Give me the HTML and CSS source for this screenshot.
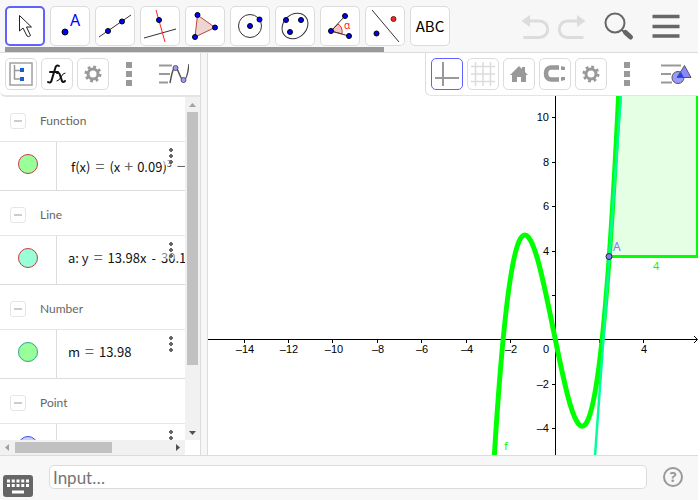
FILE: index.html
```html
<!DOCTYPE html>
<html lang="en">
<head>
    <meta charset="UTF-8">
    <meta name="viewport" content="width=device-width, initial-scale=1.0">
    <title>Graphing Calculator</title>
    <link rel="stylesheet" href="styles.css">
</head>
<body>
    <header class="toolbar">
        <div class="tools">
            <button class="tool selected" aria-label="Move">
                <svg width="36" height="36" viewBox="0 0 36 36"><path d="M12.500 7.500v15.500l3.500-3 4 8q1.500 1.500 3.500-.5l-4-8.500h5z" fill="#fff" stroke="#222"/></svg>
            </button>
            <button class="tool" aria-label="Point">
                <svg width="36" height="36" viewBox="0 0 36 36"><circle cx="13" cy="24" r="3" fill="#00f" stroke="#000"/><text x="18" y="18" class="tool-a">A</text></svg>
            </button>
            <button class="tool" aria-label="Line">
                <svg width="36" height="36" viewBox="0 0 36 36"><path d="M2 29L34 7" stroke="#333"/><g fill="#00f" stroke="#000"><circle cx="11" cy="23" r="2.500"/><circle cx="25" cy="13.500" r="2.500"/></g></svg>
            </button>
            <button class="tool" aria-label="Perpendicular Line">
                <svg width="36" height="36" viewBox="0 0 36 36"><path d="M2 30L34 21" stroke="#333"/><path d="M14 2l9 32" stroke="#f22"/><circle cx="17" cy="12" r="2.500" fill="#00f" stroke="#000"/></svg>
            </button>
            <button class="tool" aria-label="Polygon">
                <svg width="36" height="36" viewBox="0 0 36 36"><path d="M10.500 7L28 19.500 8 29z" fill="#eed5d2" stroke="#b44"/><g fill="#00f" stroke="#000"><circle cx="10.500" cy="7" r="2.500"/><circle cx="28" cy="19.500" r="2.500"/><circle cx="8" cy="29" r="2.500"/></g></svg>
            </button>
            <button class="tool" aria-label="Circle with Center through Point">
                <svg width="36" height="36" viewBox="0 0 36 36"><circle cx="18" cy="18" r="11.500" fill="none" stroke="#333"/><g fill="#00f" stroke="#000"><circle cx="18" cy="18" r="2.500"/><circle cx="27.500" cy="11.500" r="2.500"/></g></svg>
            </button>
            <button class="tool" aria-label="Ellipse">
                <svg width="36" height="36" viewBox="0 0 36 36"><ellipse cx="18" cy="18" rx="14" ry="11.500" transform="rotate(-42 18 18)" fill="none" stroke="#333"/><g fill="#00f" stroke="#000"><circle cx="9" cy="12" r="2.500"/><circle cx="24" cy="12" r="2.500"/><circle cx="13" cy="24" r="2.500"/></g></svg>
            </button>
            <button class="tool" aria-label="Angle">
                <svg width="36" height="36" viewBox="0 0 36 36"><path d="M9 23l7-7q5 3 4 10z" fill="#f5c5c5" stroke="#d33"/><path d="M23 8L9 23l18 5" fill="none" stroke="#333"/><g fill="#00f" stroke="#000"><circle cx="23" cy="8" r="2.500"/><circle cx="9" cy="23" r="2.500"/><circle cx="27" cy="28" r="2.500"/></g><text x="22" y="21" class="tool-alpha">α</text></svg>
            </button>
            <button class="tool" aria-label="Reflect about Line">
                <svg width="36" height="36" viewBox="0 0 36 36"><path d="M5 2l27 32" stroke="#333"/><circle cx="26.500" cy="11" r="2.500" fill="#f22" stroke="#622"/><circle cx="9.500" cy="25.500" r="2.500" fill="#00f" stroke="#000"/></svg>
            </button>
            <button class="tool tool-text">ABC</button>
        </div>
        <div class="actions">
            <button class="action" aria-label="Undo">
                <svg width="32" height="32" viewBox="0 0 32 32"><path d="M3.500 27.500h16a8.200 8.200 0 0 0 0-16.500H9" fill="none" stroke="#dcdcdc" stroke-width="3"/><path d="M1.500 11l8.500-6v12z" fill="#dcdcdc"/></svg>
            </button>
            <button class="action" aria-label="Redo">
                <svg width="32" height="32" viewBox="0 0 32 32"><path d="M26.500 27.500h-16a8.200 8.200 0 0 1 0-16.500H21" fill="none" stroke="#dcdcdc" stroke-width="3"/><path d="M28.500 11L20 5v12z" fill="#dcdcdc"/></svg>
            </button>
            <button class="action search" aria-label="Search">
                <svg width="32" height="32" viewBox="0 0 32 32"><circle cx="11" cy="13" r="9.500" fill="none" stroke="#666" stroke-width="2"/><path d="M17.500 19.500l4 4" stroke="#666" stroke-width="2"/><path d="M21.500 22.500l5 4.500" stroke="#666" stroke-width="5" stroke-linecap="round"/></svg>
            </button>
            <button class="action" aria-label="Menu">
                <svg width="32" height="32" viewBox="0 0 32 32"><path d="M1.500 6.500h27M1.500 16.500h27M1.500 26h27" stroke="#666" stroke-width="3.500"/></svg>
            </button>
        </div>
        <div class="tool-scroll"></div>
    </header>

    <main class="views">
        <section class="algebra">
            <div class="stylebar">
                <button class="style-btn" aria-label="Sort objects">
                    <svg width="26" height="26" viewBox="0 0 26 26"><rect x="2" y="2" width="22" height="22" fill="none" stroke="#a0a0a0" stroke-width="1.500"/><path d="M6.500 4v14H12M6.500 9.500H12" fill="none" stroke="#999" stroke-width="1.500"/><path d="M12 7h4v4h-4zM12 16h4v4h-4z" fill="#1c5bd8"/></svg>
                </button>
                <button class="style-btn" aria-label="Auxiliary objects">
                    <svg width="26" height="26" viewBox="0 0 26 26"><g fill="none" stroke="#111" stroke-linecap="round"><path d="M4 21q3 2 4-3l3-10q1-5 4-3M6 11h8" stroke-width="2"/><path d="M13 12q2-1 3 2l2 6q1 2 3 0" stroke-width="2"/><path d="M21 12q-2 0-4 4t-4 4"/></g></svg>
                </button>
                <button class="style-btn" aria-label="Settings">
                    <svg width="26" height="26" viewBox="0 0 26 26"><circle cx="13" cy="13" r="5" fill="none" stroke="#999" stroke-width="3"/><circle cx="13" cy="13" r="7" fill="none" stroke="#999" stroke-width="3" stroke-dasharray="2.750"/></svg>
                </button>
                <button class="more-btn" aria-label="More">
                    <svg width="6" height="24" viewBox="0 0 6 24"><path d="M0 0h6v6H0zM0 9h6v6H0zM0 18h6v6H0z" fill="#999"/></svg>
                </button>
                <button class="view-btn" aria-label="Algebra view">
                    <svg width="32" height="22" viewBox="0 0 32 22"><path d="M2 2.500h13M2 11h11M2 19.500h9" stroke="#999" stroke-width="2"/><path d="M13 20C15 9 16.500 4 18.500 4.500C21.500 5 23 17 26.500 17C29 17 31 10 32 1" fill="none" stroke="#555" stroke-width="1.500"/><g fill="#99f" stroke="#555"><circle cx="18.500" cy="5" r="2.500"/><circle cx="26.500" cy="17" r="2.500"/></g></svg>
                </button>
            </div>
            <div class="algebra-body">
                <div class="objects">
                    <h2 class="group"><button class="fold" aria-label="Collapse Function"></button>Function</h2>
                    <div class="row">
                        <div class="marble-cell"><button class="marble green" aria-label="Show f"></button></div>
                        <div class="formula function">f(x)<span class="op">=</span>(x<span class="op plus">+</span>0.09)<sup>3</sup><span class="op">−</span></div>
                        <button class="dots" aria-label="More f"></button>
                    </div>
                    <h2 class="group"><button class="fold" aria-label="Collapse Line"></button>Line</h2>
                    <div class="row">
                        <div class="marble-cell"><button class="marble teal" aria-label="Show a"></button></div>
                        <div class="formula">a: y<span class="op">=</span>13.98x<span class="minus">-</span>30.1</div>
                        <button class="dots" aria-label="More a"></button>
                    </div>
                    <h2 class="group"><button class="fold" aria-label="Collapse Number"></button>Number</h2>
                    <div class="row">
                        <div class="marble-cell"><button class="marble green number" aria-label="Show m"></button></div>
                        <div class="formula">m<span class="op">=</span>13.98</div>
                        <button class="dots" aria-label="More m"></button>
                    </div>
                    <h2 class="group"><button class="fold" aria-label="Collapse Point"></button>Point</h2>
                    <div class="row">
                        <div class="marble-cell"><button class="marble blue" aria-label="Show A"></button></div>
                        <div class="formula"></div>
                        <button class="dots" aria-label="More A"></button>
                    </div>
                </div>
                <div class="scroll-v">
                    <svg width="15" height="15" viewBox="0 0 15 15"><path d="M4 10l3.500-4 3.500 4z" fill="#a3a3a3"/></svg>
                    <div class="thumb-v"></div>
                    <svg width="15" height="15" viewBox="0 0 15 15"><path d="M4 6h7l-3.500 4z" fill="#505050"/></svg>
                </div>
                <div class="scroll-h">
                    <svg width="15" height="15" viewBox="0 0 15 15"><path d="M9 4v7L5 7.500z" fill="#a3a3a3"/></svg>
                    <div class="thumb-h"></div>
                    <svg width="15" height="15" viewBox="0 0 15 15"><path d="M6 4v7l4-3.500z" fill="#505050"/></svg>
                </div>
            </div>
        </section>
        <div class="splitter"></div>
        <section class="graphics">
            <svg class="plot" viewBox="208 53 490 402" preserveAspectRatio="xMidYMid slice">
                <!-- axes: origin 555.5,339.5 and 22.2 per unit -->
                <g stroke="#000" fill="none" shape-rendering="crispEdges">
                    <path d="M208 339.500H697M555.500 53V455"/>
                    <path d="M244.500 339v4M288.500 339v4M332.500 339v4M377.500 339v4M421.500 339v4M466.500 339v4M510.500 339v4M599.500 339v4M643.500 339v4"/>
                    <path d="M552 117.500h4M552 162.500h4M552 206.500h4M552 251.500h4M552 295.500h4M552 384.500h4M552 428.500h4"/>
                </g>
                <path d="M694 336l3.500 3.500L694 343" fill="none" stroke="#000"/>
                <g class="labels-x">
                    <text x="245" y="353">–14</text>
                    <text x="289" y="353">–12</text>
                    <text x="334" y="353">–10</text>
                    <text x="378" y="353">–8</text>
                    <text x="422" y="353">–6</text>
                    <text x="467" y="353">–4</text>
                    <text x="511" y="353">–2</text>
                    <text x="546" y="353">0</text>
                    <text x="644" y="353">4</text>
                </g>
                <g class="labels-y">
                    <text x="549" y="121">10</text>
                    <text x="549" y="166">8</text>
                    <text x="549" y="210">6</text>
                    <text x="549" y="255">4</text>
                    <text x="549" y="388">–2</text>
                    <text x="549" y="432">–4</text>
                </g>
                <!-- slope triangle -->
                <path d="M609 256.500H697.500V-980z" fill="#0f0" fill-opacity=".1" stroke="#0f0" stroke-width="3"/>
                <path d="M486.900 597C531.300-379.800 575.700 1041 620.100 64.200" fill="none" stroke="#0f0" stroke-width="5"/>
                <path d="M592 498L622.500 73" stroke="#00ff99" stroke-width="2.500"/>
                <circle cx="609" cy="256.500" r="3" fill="#7d7dff" stroke="#222"/>
                <text x="613" y="251" class="label-point">A</text>
                <text x="653" y="270" class="label-green">4</text>
                <text x="504" y="450" class="label-green">f</text>
            </svg>
            <div class="stylebar graphics-bar">
                <button class="style-btn selected" aria-label="Axes">
                    <svg width="26" height="26" viewBox="0 0 26 26"><path d="M1 17h24M9 1v24" stroke="#999" stroke-width="2"/></svg>
                </button>
                <button class="style-btn" aria-label="Grid">
                    <svg width="26" height="26" viewBox="0 0 26 26"><path d="M1 5.500h24M1 13h24M1 20.500h24M5.500 1v24M13 1v24M20.500 1v24" stroke="#dcdcdc" stroke-width="1.500"/></svg>
                </button>
                <button class="style-btn" aria-label="Standard view">
                    <svg width="26" height="26" viewBox="0 0 26 26"><path d="M4 14l9-9 3 3V6h3v5l3 3h-2v7h-5v-5h-4v5H6v-7z" fill="#999"/></svg>
                </button>
                <button class="style-btn" aria-label="Point capturing">
                    <svg width="26" height="26" viewBox="0 0 26 26"><path d="M17 6.500H9q-5 .5-5 6t5 6h8" fill="none" stroke="#999" stroke-width="4.500"/><path d="M19 5l4 1v3h-4zM19 16h4v3l-4 1z" fill="#999"/></svg>
                </button>
                <button class="style-btn" aria-label="Settings">
                    <svg width="26" height="26" viewBox="0 0 26 26"><circle cx="13" cy="13" r="5" fill="none" stroke="#999" stroke-width="3"/><circle cx="13" cy="13" r="7" fill="none" stroke="#999" stroke-width="3" stroke-dasharray="2.750"/></svg>
                </button>
                <button class="more-btn" aria-label="More">
                    <svg width="6" height="24" viewBox="0 0 6 24"><path d="M0 0h6v6H0zM0 9h6v6H0zM0 18h6v6H0z" fill="#999"/></svg>
                </button>
                <button class="view-btn" aria-label="Graphics view">
                    <svg width="32" height="22" viewBox="0 0 32 22"><path d="M1 2.500h20M1 11h10M1 19.500h11" stroke="#999" stroke-width="2"/><circle cx="18" cy="14.500" r="6" fill="#99f" stroke="#555"/><path d="M24.500 2.500L31 14.500H17z" fill="#88f" stroke="#555"/><path d="M21 9l2.500 5H17.500z" fill="#24d"/></svg>
                </button>
            </div>
        </section>
    </main>

    <footer class="input-bar">
        <button class="keyboard" aria-label="Keyboard">
            <svg width="30" height="22" viewBox="0 0 30 22"><rect width="30" height="22" rx="3" fill="#666"/><path d="M4 6h22M4 10.500h22" stroke="#fff" stroke-width="3" stroke-dasharray="3 1.750"/><path d="M9 17h12" stroke="#fff" stroke-width="3"/></svg>
        </button>
        <input class="command" type="text" placeholder="Input…" aria-label="Input">
        <button class="help" aria-label="Help">?</button>
    </footer>
</body>
</html>
```
FILE: styles.css
```css
* {
    box-sizing: border-box;
}

body {
    margin: 0;
    padding: 0 2px 0 0;
    height: 100vh;
    display: flex;
    flex-direction: column;
    overflow: hidden;
    background: #fff;
    font-family: "Noto Sans CJK SC", "Noto Sans", sans-serif;
}

button {
    padding: 0;
    border: none;
    background: none;
    font-family: inherit;
    cursor: pointer;
}

svg {
    display: block;
}

.toolbar {
    position: relative;
    display: flex;
    justify-content: space-between;
    padding: 6px 15px 6px 5px;
    background: #f7f7f7;
    border-bottom: 1px solid #dcdcdc;
}

.tools {
    display: flex;
    gap: 5px;
}

.tool {
    display: flex;
    align-items: center;
    justify-content: center;
    width: 40px;
    height: 40px;
    background: #fff;
    border: 1px solid #dcdcdc;
    border-radius: 5px;
}

.tool.selected {
    border: 2px solid #6161ff;
}

.tool-text {
    padding-bottom: 2px;
    font-size: 15px;
    color: #000;
}

.tool-a {
    font: 16px "Noto Sans", sans-serif;
    fill: #00f;
}

.tool-alpha {
    font: 10px "Noto Sans", sans-serif;
    fill: #f22;
}

.tool-scroll {
    position: absolute;
    left: 5px;
    bottom: 0;
    width: 379px;
    height: 5px;
    background: #999;
}

.actions {
    display: flex;
    align-items: center;
    gap: 5px;
}

.search {
    margin-left: 10px;
    margin-right: 10px;
}

.views {
    flex: 1;
    display: flex;
    min-height: 0;
}

.algebra {
    display: flex;
    flex-direction: column;
    width: 200px;
}

.stylebar {
    display: flex;
    align-items: center;
    gap: 4px;
    height: 44px;
    padding: 0 11px 0 5px;
    background: #fff;
    border-bottom: 2px solid #e4e4e4;
    border-radius: 0 0 0 6px;
}

.style-btn {
    display: flex;
    align-items: center;
    justify-content: center;
    width: 32px;
    height: 32px;
    background: #fff;
    border: 1px solid #dcdcdc;
    border-radius: 5px;
}

.style-btn.selected {
    border-color: #6161ff;
}

.more-btn {
    margin-left: 13px;
}

.view-btn {
    margin-left: auto;
}

.algebra-body {
    flex: 1;
    display: grid;
    grid-template-columns: 1fr 15px;
    grid-template-rows: 1fr 15px;
    min-height: 0;
}

.objects {
    overflow: hidden;
}

.group {
    display: flex;
    align-items: center;
    gap: 14px;
    height: 45px;
    margin: 0;
    padding: 3px 0 0 10px;
    border-bottom: 1px solid #e6e6e6;
    font: 12px Lato, sans-serif;
    color: #666;
}

.fold {
    display: flex;
    align-items: center;
    justify-content: center;
    width: 16px;
    height: 16px;
    border: 1px solid #e6e6e6;
    border-radius: 3px;
}

.fold::before {
    content: "";
    width: 8px;
    height: 2px;
    background: #ccc;
}

.row {
    position: relative;
    display: flex;
    height: 49px;
    border-bottom: 1px solid #dcdcdc;
}

.marble-cell {
    flex: none;
    width: 57px;
    padding: 12px 0 0 18px;
    border-right: 1px solid #dcdcdc;
}

.marble {
    display: block;
    width: 20px;
    height: 20px;
    border: 1px solid #c23b4b;
    border-radius: 50%;
}

.marble.green {
    background: #99ff99;
}

.marble.teal {
    background: #99ffd6;
}

.marble.number {
    border-color: #2aa58c;
}

.marble.blue {
    background: #ccccff;
    border-color: #3b50dd;
}

.formula {
    padding-left: 11px;
    font-size: 13px;
    line-height: 44px;
    white-space: nowrap;
    color: #111;
}

.formula.function {
    padding-left: 14px;
    line-height: 50px;
}

.formula sup {
    font-size: 9px;
    line-height: 1;
}

.op {
    margin: 0 5px;
    font-size: 16px;
    line-height: 1;
    color: #666;
}

.op.plus {
    margin: 0 4px;
}

.minus {
    margin: 0 5px;
}

.dots {
    position: absolute;
    top: 5px;
    right: 4px;
    width: 20px;
    height: 18px;
    background:
        radial-gradient(circle, #666 2px, transparent 2px) center top / 6px 6px repeat-y,
        rgba(255, 255, 255, 0.5);
}

.scroll-v {
    display: flex;
    flex-direction: column;
    justify-content: space-between;
    background: #f1f1f1;
}

.thumb-v {
    flex: 1;
    width: 11px;
    margin: 0 auto 60px;
    background: #c1c1c1;
}

.scroll-h {
    display: flex;
    background: #f1f1f1;
}

.thumb-h {
    flex: 1;
    height: 11px;
    margin: 2px 58px 0 0;
    background: #c1c1c1;
}

.splitter {
    width: 8px;
    background: #f7f7f7;
    border: 1px solid #dcdcdc;
    border-width: 0 1px;
}

.graphics {
    position: relative;
    flex: 1;
    min-width: 0;
    overflow: hidden;
}

.plot {
    width: 100%;
    height: 100%;
}

.labels-x,
.labels-y {
    font: 11px "Liberation Sans", Arial, sans-serif;
    fill: #000;
}

.labels-x {
    text-anchor: middle;
}

.labels-y {
    text-anchor: end;
}

.label-point {
    font: 12px "Noto Sans", sans-serif;
    fill: #7d7dff;
}

.label-green {
    font: 11px "Noto Sans", sans-serif;
    fill: #0f0;
}

.graphics-bar {
    position: absolute;
    top: 0;
    right: 0;
    width: 273px;
    height: 43px;
    padding: 0 6px 0 5px;
    border-left: 1px solid #dcdcdc;
    border-bottom-width: 1px;
}

.input-bar {
    display: flex;
    align-items: center;
    gap: 16px;
    height: 45px;
    padding: 0 15px 2px 3px;
    background: #f7f7f7;
    border-top: 1px solid #dcdcdc;
}

.keyboard {
    align-self: flex-end;
    margin-bottom: 1px;
}

.command {
    flex: 1;
    min-width: 0;
    height: 24px;
    padding: 0 3px;
    border: 1px solid #dcdcdc;
    border-radius: 5px;
    background: #fff;
    font: 17px Lato, sans-serif;
    color: #333;
}

.command::placeholder {
    color: #757575;
}

.help {
    width: 20px;
    height: 20px;
    border: 2px solid #999;
    border-radius: 50%;
    font: bold 14px/16px "Noto Sans", sans-serif;
    color: #999;
}
```
